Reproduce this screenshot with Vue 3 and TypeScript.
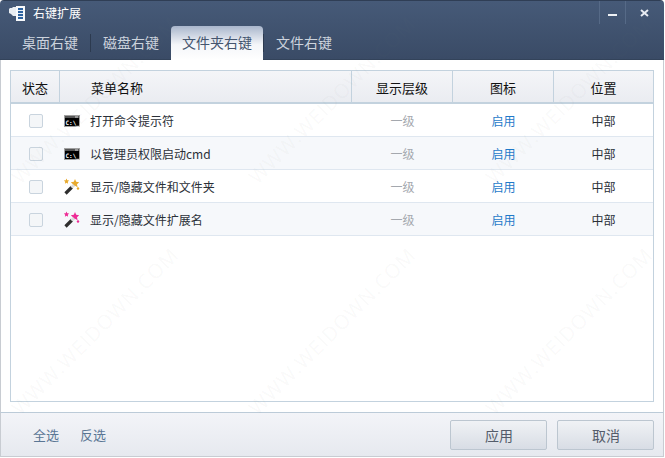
<template>
  <div class="window">
    <header class="head">
      <div class="title-bar">
        <svg class="app-icon" width="18" height="16" viewBox="0 0 18 16">
          <path d="M2 3h2l1-1h4v9H5L3 9 1 8V4z" fill="#e9edf2" />
          <rect x="8" y="1" width="9" height="15" fill="#f7f9fb" />
          <rect x="10" y="3" width="5" height="11" fill="#2c62a0" />
          <path d="M10 5.500h5M10 8.500h5M10 11.500h5" stroke="#e8eef5" stroke-width="1" />
        </svg>
        <span class="app-title">右键扩展</span>
        <div class="win-btns">
          <button class="win-btn"><span class="min-bar"></span></button>
          <button class="win-btn wide">
            <svg width="9" height="8" viewBox="0 0 9 8">
              <path d="M1 1l7 6M8 1L1 7" stroke="#e8ecf2" stroke-width="2" fill="none" />
            </svg>
          </button>
        </div>
      </div>
      <nav class="tabs">
        <template v-for="(tab, i) in tabs" :key="tab">
          <span v-if="i === 1 || i === 3" class="tab-sep"></span>
          <div class="tab" :class="{ active: i === activeTab }">{{ tab }}</div>
        </template>
      </nav>
    </header>

    <main class="body">
      <div class="table">
        <div class="row head-row">
          <div class="cell center divided">状态</div>
          <div class="cell name-head divided">菜单名称</div>
          <div class="cell center divided">显示层级</div>
          <div class="cell center divided">图标</div>
          <div class="cell center">位置</div>
        </div>
        <div v-for="(item, i) in items" :key="item.name" class="row" :class="{ alt: i % 2 === 1 }">
          <div class="cell center"><span class="check"></span></div>
          <div class="cell name">
            <svg v-if="item.icon === 'cmd'" class="row-icon" width="18" height="18" viewBox="0 0 18 18">
              <rect x="1" y="3" width="16" height="12" fill="#a0a0a0" />
              <rect x="2" y="4" width="14" height="2" fill="#555" />
              <path d="M12 5h3" stroke="#ddd" stroke-width="1" />
              <rect x="2" y="6" width="14" height="8" fill="#000" />
              <text x="2.500" y="12.500" class="cmd-text">C:\_</text>
            </svg>
            <svg v-else class="row-icon" width="18" height="18" viewBox="0 0 18 18">
              <g :fill="item.icon === 'wand-pink' ? '#ee2c96' : '#e8aa2e'">
                <path d="M3.500 .5l.8 1.700 1.900.3-1.400 1.300.3 1.900-1.600-.9-1.600.9.3-1.900L.8 2.500l1.900-.3z" />
                <path d="M12 1l1.200 2.800 3 .4-2.200 2 .6 3L12 7.700 9.400 9.200l.6-3-2.200-2 3-.4z" />
                <circle cx="15" cy="10.500" r="1.200" />
              </g>
              <path d="M2.500 15.500L9 9" stroke="#2e2e2e" stroke-width="3.200" />
              <path d="M8.500 9.500L11 7" stroke="#dcdcdc" stroke-width="3" />
            </svg>
            <span>{{ item.name }}</span>
          </div>
          <div class="cell center muted">一级</div>
          <div class="cell center link">启用</div>
          <div class="cell center">中部</div>
        </div>
      </div>
    </main>

    <footer class="foot">
      <div class="foot-links">
        <a>全选</a>
        <a>反选</a>
      </div>
      <div class="foot-btns">
        <button class="btn">应用</button>
        <button class="btn">取消</button>
      </div>
    </footer>

    <div class="watermarks" aria-hidden="true">
      <span v-for="m in marks" :key="m.x + '-' + m.y" class="mark" :style="{ left: m.x + 'px', top: m.y + 'px' }">WWW.WEIDOWN.COM</span>
    </div>
  </div>
</template>

<script setup lang="ts">
interface Item {
  name: string
  icon: 'cmd' | 'wand-gold' | 'wand-pink'
}

const activeTab = 2
const tabs = ['桌面右键', '磁盘右键', '文件夹右键', '文件右键']

const items: Item[] = [
  { name: '打开命令提示符', icon: 'cmd' },
  { name: '以管理员权限启动cmd', icon: 'cmd' },
  { name: '显示/隐藏文件和文件夹', icon: 'wand-gold' },
  { name: '显示/隐藏文件扩展名', icon: 'wand-pink' }
]

// centres of the diagonal watermark text
const marks = [
  { x: 95, y: 100 },
  { x: 332, y: 100 },
  { x: 569, y: 100 },
  { x: 95, y: 331 },
  { x: 332, y: 331 },
  { x: 569, y: 331 }
]
</script>

<style>
html,
body {
  margin: 0;
  background: #fff;
  overflow: hidden;
}
</style>

<style scoped>
.window {
  position: relative;
  width: 664px;
  height: 457px;
  display: flex;
  flex-direction: column;
  overflow: hidden;
  background: #fff;
  border-radius: 4px 4px 0 0;
  font-family: "Noto Sans CJK SC", "Liberation Sans", sans-serif;
  font-size: 12px;
  color: #2b3038;
}

.head {
  height: 60px;
  flex-shrink: 0;
  background: linear-gradient(#465a78, #3a4b66);
  border-top: 1px solid #2f3e55;
  box-sizing: border-box;
  border-bottom: 1px solid #33435a;
  display: flex;
  flex-direction: column;
}

.title-bar {
  height: 25px;
  display: flex;
  align-items: center;
  padding-left: 8px;
  color: #fff;
}

.app-icon {
  margin: 0 7px 2px 0;
}

.app-title {
  font-size: 12px;
  margin-bottom: 2px;
}

.win-btns {
  margin-left: auto;
  margin-right: 2px;
  display: flex;
  align-self: flex-start;
}

.win-btn {
  width: 26px;
  height: 23px;
  padding: 0;
  background: none;
  border: none;
  border-left: 1px solid #566a87;
  display: flex;
  align-items: center;
  justify-content: center;
}

.win-btn.wide {
  width: 37px;
}

.min-bar {
  width: 9px;
  height: 2px;
  margin-top: 4px;
  background: #eef1f5;
}

.tabs {
  flex: 1;
  display: flex;
  align-items: stretch;
  padding-left: 10px;
}

.tab {
  padding: 0 12px;
  font-size: 14px;
  line-height: 33px;
  color: #ccd3dd;
}

.tab.active {
  width: 92px;
  box-sizing: border-box;
  padding: 0;
  margin-bottom: -1px;
  text-align: center;
  color: #44556e;
  background: linear-gradient(#a9b6cc, #f4f6f9 55%, #fff);
  border-radius: 4px 4px 0 0;
}

.tab-sep {
  width: 1px;
  height: 18px;
  margin-top: 8px;
  background: #2c3a4f;
}

.body {
  flex: 1;
  padding: 10px 9px 10px 9px;
  display: flex;
  min-height: 0;
  border-left: 1px solid #c8ccd2;
  border-right: 1px solid #c8ccd2;
}

.table {
  flex: 1;
  border: 1px solid #c3d2de;
}

.row {
  display: grid;
  grid-template-columns: 49px 292px 101px 101px 1fr;
  height: 33px;
  border-bottom: 1px solid #dfe7f0;
  box-sizing: border-box;
}

.row.alt {
  background: #f6f8fb;
}

.head-row {
  background: linear-gradient(#f4f5f8, #eaecf1);
  border-bottom: 2px solid #c3d2de;
  font-size: 13px;
  color: #111;
}

.cell {
  display: flex;
  align-items: center;
  min-width: 0;
  padding-top: 1px;
}

.center {
  justify-content: center;
}

.divided {
  border-right: 1px solid #c3d2de;
}

.name-head {
  padding-left: 31px;
}

.name {
  padding-left: 3px;
  gap: 9px;
}

.row-icon {
  flex-shrink: 0;
}

.cmd-text {
  font-family: "DejaVu Sans Mono", monospace;
  font-size: 6px;
  font-weight: 700;
  fill: #fff;
}

.check {
  width: 12px;
  height: 12px;
  border: 1px solid #c9d4de;
  border-radius: 2px;
  background: #f4f6f8;
}

.muted {
  color: #a4a8ae;
}

.link {
  color: #1f7ac9;
}

.foot {
  height: 45px;
  flex-shrink: 0;
  box-sizing: border-box;
  background: linear-gradient(#f3f4f8, #e6e9ef);
  border: 1px solid #c8ccd2;
  border-top: 1px solid #bccbd8;
  display: flex;
  align-items: center;
  justify-content: space-between;
  padding: 0 9px 0 32px;
}

.foot-links {
  display: flex;
  gap: 21px;
  font-size: 13px;
  color: #5a7694;
}

.foot-btns {
  display: flex;
  gap: 10px;
}

.btn {
  width: 97px;
  height: 30px;
  padding: 0 0 0 1px;
  font-family: inherit;
  font-size: 14px;
  color: #545c6a;
  background: linear-gradient(#f0f2f5, #d8dde5);
  border: 1px solid #bcc6d0;
  border-radius: 2px;
}

.watermarks {
  position: absolute;
  inset: 0;
  pointer-events: none;
}

.mark {
  position: absolute;
  transform: translate(-50%, -50%) rotate(-45deg);
  font-family: "Open Sans", "Liberation Sans", sans-serif;
  font-size: 20px;
  letter-spacing: 1px;
  white-space: nowrap;
  color: rgba(120, 120, 120, 0.05);
}
</style>
